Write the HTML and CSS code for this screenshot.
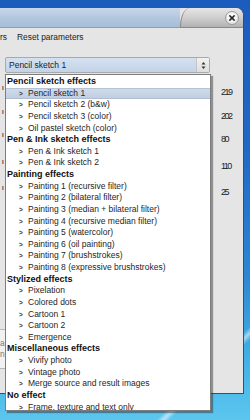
FILE: index.html
```html
<!DOCTYPE html>
<html>
<head>
<meta charset="utf-8">
<link rel="stylesheet" href="styles.css">
</head>
<body>
<div class="desktop">
  <div class="window">
    <div class="titlebar">
      <div class="title-left"></div>
      <div class="title-tab">
        <span class="close">
          <svg width="14" height="14" viewBox="0 0 14 14"><path d="M4.5 4.5 L9.5 9.5 M9.5 4.5 L4.5 9.5" stroke="#2a2a2a" stroke-width="1.8" stroke-linecap="round"/></svg>
        </span>
      </div>
    </div>
    <div class="menubar"><span class="menu-item">rs</span><span class="menu-item">Reset parameters</span></div>
    <div class="content">
      <div class="combo">
        <span class="combo-text">Pencil sketch 1</span>
        <span class="spin"><svg width="5" height="9" viewBox="0 0 5 9"><path d="M0.5 3.5 L2.5 1 L4.5 3.5 Z M0.5 5.5 L2.5 8 L4.5 5.5 Z" fill="#333"/></svg></span>
      </div>
      <div class="params">
        <div class="param"><span class="label">l</span><span class="val">219</span></div>
        <div class="param"><span class="label">l</span><span class="val">202</span></div>
        <div class="param"><span class="label">l</span><span class="val">80</span></div>
        <div class="param"><span class="label">l</span><span class="val">110</span></div>
        <div class="param"><span class="label">l</span><span class="val">25</span></div>
      </div>
      <div class="textbox"><span>a</span><span>n</span></div>
    </div>
  </div>

  <div class="popup">
    <div class="hdr">Pencil sketch effects</div>
    <div class="item sel"><span class="chev">&gt;</span>Pencil sketch 1</div>
    <div class="item"><span class="chev">&gt;</span>Pencil sketch 2 (b&amp;w)</div>
    <div class="item"><span class="chev">&gt;</span>Pencil sketch 3 (color)</div>
    <div class="item"><span class="chev">&gt;</span>Oil pastel sketch (color)</div>
    <div class="hdr">Pen &amp; Ink sketch effects</div>
    <div class="item"><span class="chev">&gt;</span>Pen &amp; Ink sketch 1</div>
    <div class="item"><span class="chev">&gt;</span>Pen &amp; Ink sketch 2</div>
    <div class="hdr">Painting effects</div>
    <div class="item"><span class="chev">&gt;</span>Painting 1 (recursive filter)</div>
    <div class="item"><span class="chev">&gt;</span>Painting 2 (bilateral filter)</div>
    <div class="item"><span class="chev">&gt;</span>Painting 3 (median + bilateral filter)</div>
    <div class="item"><span class="chev">&gt;</span>Painting 4 (recursive median filter)</div>
    <div class="item"><span class="chev">&gt;</span>Painting 5 (watercolor)</div>
    <div class="item"><span class="chev">&gt;</span>Painting 6 (oil painting)</div>
    <div class="item"><span class="chev">&gt;</span>Painting 7 (brushstrokes)</div>
    <div class="item"><span class="chev">&gt;</span>Painting 8 (expressive brushstrokes)</div>
    <div class="hdr">Stylized effects</div>
    <div class="item"><span class="chev">&gt;</span>Pixelation</div>
    <div class="item"><span class="chev">&gt;</span>Colored dots</div>
    <div class="item"><span class="chev">&gt;</span>Cartoon 1</div>
    <div class="item"><span class="chev">&gt;</span>Cartoon 2</div>
    <div class="item"><span class="chev">&gt;</span>Emergence</div>
    <div class="hdr">Miscellaneous effects</div>
    <div class="item"><span class="chev">&gt;</span>Vivify photo</div>
    <div class="item"><span class="chev">&gt;</span>Vintage photo</div>
    <div class="item"><span class="chev">&gt;</span>Merge source and result images</div>
    <div class="hdr">No effect</div>
    <div class="item"><span class="chev">&gt;</span>Frame, texture and text only</div>
  </div>
</div>
</body>
</html>
```
FILE: styles.css
```css
* { box-sizing: border-box; }
html, body { margin: 0; padding: 0; }
body { width: 250px; height: 420px; overflow: hidden; font-family: "Liberation Sans", Arial, sans-serif; }

.desktop {
  position: relative;
  width: 250px;
  height: 420px;
  overflow: hidden;
  padding-top: 8px;
  background:
    linear-gradient(135deg, transparent 0 86%, rgba(255,255,255,0.55) 87%, transparent 88% 100%),
    linear-gradient(to bottom, #1b5cbc 0%, #2168c4 35%, #2b86d4 65%, #43afe5 85%, #5cc6ef 100%);
}

.window {
  width: 244px;
  height: 386px;
  background: #e5e5e5;
  border-right: 1px solid #4b4b4b;
  border-bottom: 1px solid #4b4b4b;
  border-top-right-radius: 8px;
  overflow: hidden;
  display: flex;
  flex-direction: column;
}

.titlebar {
  height: 20px;
  display: flex;
  flex: none;
}
.title-left {
  flex: 1;
  background: linear-gradient(to bottom, #c6d7ea 0%, #b3c8df 50%, #a7bdd7 100%);
  border-bottom: 1px solid #8f9fb3;
}
.title-tab {
  width: 63px;
  display: flex;
  align-items: center;
  justify-content: flex-end;
  padding-right: 4px;
  background: linear-gradient(to bottom, #e6e6e6 0%, #cfcfcf 50%, #b2b2b2 100%);
  border-left: 1px solid #8a8a8a;
  border-top-left-radius: 10px 18px;
  border-bottom: 1px solid #8a8a8a;
}
.close {
  width: 14px;
  height: 14px;
  border-radius: 50%;
  background: radial-gradient(circle at 50% 40%, #ffffff 0%, #f0f0f0 50%, #cfcfcf 100%);
  border: 1px solid #9a9a9a;
  display: flex;
  align-items: center;
  justify-content: center;
}
.close svg { display: block; }

.menubar {
  height: 17px;
  flex: none;
  display: flex;
  align-items: center;
  gap: 10px;
  font-size: 8.4px;
  color: #222;
  padding-top: 1px;
}

.content {
  flex: 1;
  display: flex;
  flex-direction: column;
}

.combo {
  margin-top: 12px;
  margin-left: 5px;
  width: 205px;
  height: 16px;
  border: 1px solid #a9a9a9;
  border-radius: 2px;
  background: linear-gradient(to bottom, #d4e1f0 0%, #c3d4e9 100%);
  display: flex;
  align-items: center;
}
.combo-text {
  flex: 1;
  padding-left: 3px;
  font-size: 8.5px;
  color: #1c1c2c;
}
.spin {
  width: 13px;
  height: 100%;
  display: flex;
  align-items: center;
  justify-content: center;
  background: linear-gradient(to bottom, #f2f2f2, #dedede);
  border-left: 1px solid #c4c4c4;
}

.params {
  margin-top: 13px;
  display: flex;
  flex-direction: column;
}
.param {
  height: 12px;
  display: flex;
  justify-content: space-between;
  align-items: center;
  padding-right: 12px;
  padding-left: 2px;
  font-size: 8.6px;
  color: #222;
}
.param:nth-child(2) { margin-top: 12px; }
.param:nth-child(3) { margin-top: 11px; }
.param:nth-child(4) { margin-top: 15px; }
.param:nth-child(5) { margin-top: 14px; }
.label {
  font-size: 6px;
  font-weight: bold;
  color: #333;
  margin-top: -8px;
}
.val {
  letter-spacing: -1.5px;
  font-size: 9px;
  width: 10px;
}

.textbox {
  margin-top: 131px;
  width: 120px;
  height: 40px;
  background: #f1f1f1;
  border-top: 1px solid #b8b8b8;
  border-bottom: 1px solid #b8b8b8;
  border-right: 1px solid #b8b8b8;
  display: flex;
  flex-direction: column;
  justify-content: center;
  font-size: 8.4px;
  color: #777;
  line-height: 11px;
  padding-left: 0;
}

.popup {
  position: absolute;
  left: 5px;
  top: 74px;
  width: 206px;
  height: 337px;
  background: #fff;
  border: 1px solid #7d7d7d;
  box-shadow: 2px 2px 1px rgba(40,40,40,0.45);
  overflow: hidden;
  padding-top: 1px;
}
.hdr, .item {
  height: 11.64px;
  line-height: 11.64px;
  white-space: nowrap;
}
.hdr {
  padding-left: 1px;
  font-size: 9px;
  font-weight: bold;
  color: #111;
}
.item {
  padding-left: 13px;
  font-size: 8.5px;
  color: #262626;
  display: flex;
  align-items: center;
}
.chev {
  width: 9px;
  font-size: 6.5px;
  color: #444;
  font-weight: bold;
}
.item.sel {
  background: linear-gradient(to bottom, #d0dcea 0%, #bfcee1 100%);
  border-top: 1px solid #b5c3d6;
  border-bottom: 1px solid #aebdd1;
}
```
